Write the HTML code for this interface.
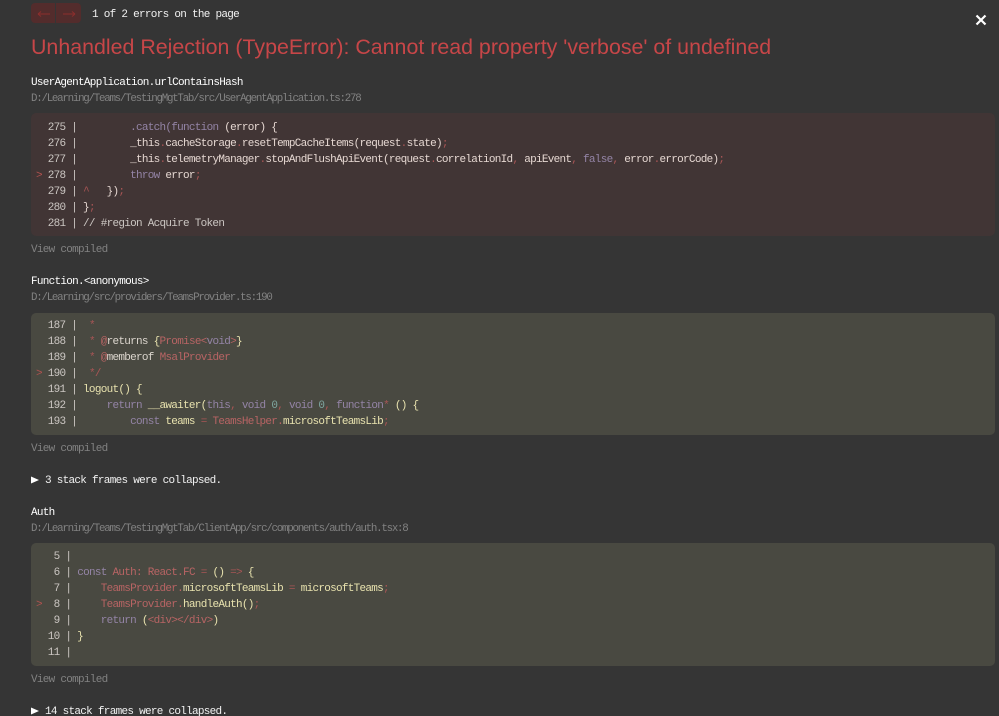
<!DOCTYPE html>
<html><head><meta charset="utf-8">
<style>
html,body{margin:0;padding:0;width:999px;height:716px;overflow:hidden;background:#353535}
#w{position:absolute;left:0;top:0;width:999px;height:716px;overflow:hidden;background:#353535;filter:blur(0.3px)}
.t{position:absolute;white-space:pre;font-family:"Liberation Mono",monospace;font-size:11px;letter-spacing:-0.72px;line-height:16px;height:16px;color:#eee}
.b{position:absolute;left:31px;width:964px;border-radius:5px}
.red{background:#413535}
.yel{background:#494941}
.g{color:#828282}
.f{font-size:10.8px;letter-spacing:-1.25px}
.n{color:#cbc6c2}
.c1{color:#e6d8d2}
.c2{color:#e8e2ae}
.k{color:#9484a6}
.p{color:#a85555}
.r{color:#b86464}
.o{color:#b4524f}
.m{color:#7fa6a0}
.lg{color:#dcd6ce}
</style></head><body><div id="w">

<div style="position:absolute;left:31px;top:3px;width:24px;height:20px;background:#532c2c;border-radius:4px 0 0 4px"></div>
<div style="position:absolute;left:56px;top:3px;width:25px;height:20px;background:#532c2c;border-radius:0 4px 4px 0"></div>
<svg style="position:absolute;left:31px;top:3px" width="50" height="20"><path d="M7 11H19M7 11l3-2.5M7 11l3 2.5M32 11H44M44 11l-3-2.5M44 11l-3 2.5" stroke="#8c2e2d" stroke-width="1" fill="none"/></svg>
<div class="t" style="left:92px;top:7px;color:#f2f2f2">1 of 2 errors on the page</div>
<svg style="position:absolute;left:975px;top:14px" width="12" height="12"><path d="M1.5 1.5L10.5 10.5M10.5 1.5L1.5 10.5" stroke="#fff" stroke-width="2.2" fill="none"/></svg>

<div style="position:absolute;left:31px;top:34px;white-space:pre;font-family:'Liberation Sans',sans-serif;font-size:21.38px;line-height:27px;color:#c74648">Unhandled Rejection (TypeError): Cannot read property 'verbose' of undefined</div>

<div class="t" style="left:31px;top:75px;color:#fff">UserAgentApplication.urlContainsHash</div>
<div class="t g f" style="left:31px;top:91px">D:/Learning/Teams/TestingMgtTab/src/UserAgentApplication.ts:278</div>
<div class="b red" style="top:113px;height:123px"></div>
<div class="t c1" style="left:36px;top:120px"><span class="n">  275 |</span>         <span class="k">.catch(function</span> (error) {</div>
<div class="t c1" style="left:36px;top:136px"><span class="n">  276 |</span>         _this<span class="p">.</span>cacheStorage<span class="p">.</span>resetTempCacheItems(request<span class="p">.</span>state)<span class="p">;</span></div>
<div class="t c1" style="left:36px;top:152px"><span class="n">  277 |</span>         _this<span class="p">.</span>telemetryManager<span class="p">.</span>stopAndFlushApiEvent(request<span class="p">.</span>correlationId<span class="p">,</span> apiEvent<span class="p">,</span> <span class="k">false</span><span class="p">,</span> error<span class="p">.</span>errorCode)<span class="p">;</span></div>
<div class="t c1" style="left:36px;top:168px"><span class="o">&gt;</span><span class="n"> 278 |</span>         <span class="k">throw</span> error<span class="p">;</span></div>
<div class="t c1" style="left:36px;top:184px"><span class="n">  279 |</span> <span class="p">^</span>   })<span class="p">;</span></div>
<div class="t c1" style="left:36px;top:200px"><span class="n">  280 |</span> }<span class="p">;</span></div>
<div class="t n" style="left:36px;top:216px">  281 | // #region Acquire Token</div>
<div class="t g" style="left:31px;top:242px">View compiled</div>

<div class="t" style="left:31px;top:274px;color:#fff">Function.&lt;anonymous&gt;</div>
<div class="t g f" style="left:31px;top:290px">D:/Learning/src/providers/TeamsProvider.ts:190</div>
<div class="b yel" style="top:313px;height:122px"></div>
<div class="t c2" style="left:36px;top:318px"><span class="n">  187 |</span>  <span class="p">*</span></div>
<div class="t c2" style="left:36px;top:334px"><span class="n">  188 |</span>  <span class="p">*</span> <span class="r">@</span><span class="lg">returns</span> {<span class="r">Promise&lt;</span><span class="k">void</span><span class="r">&gt;</span>}</div>
<div class="t c2" style="left:36px;top:350px"><span class="n">  189 |</span>  <span class="p">*</span> <span class="r">@</span><span class="lg">memberof</span> <span class="r">MsalProvider</span></div>
<div class="t c2" style="left:36px;top:366px"><span class="o">&gt;</span><span class="n"> 190 |</span>  <span class="p">*/</span></div>
<div class="t c2" style="left:36px;top:382px"><span class="n">  191 |</span> logout() {</div>
<div class="t c2" style="left:36px;top:398px"><span class="n">  192 |</span>     <span class="k">return</span> __awaiter(<span class="k">this</span><span class="p">,</span> <span class="k">void</span> <span class="m">0</span><span class="p">,</span> <span class="k">void</span> <span class="m">0</span><span class="p">,</span> <span class="k">function</span><span class="p">*</span> () {</div>
<div class="t c2" style="left:36px;top:414px"><span class="n">  193 |</span>         <span class="k">const</span> teams <span class="p">=</span> <span class="r">TeamsHelper.</span>microsoftTeamsLib<span class="p">;</span></div>
<div class="t g" style="left:31px;top:441px">View compiled</div>

<svg style="position:absolute;left:31px;top:476px" width="10" height="10"><path d="M0 0.5L8 4L0 7.5Z" fill="#fff"/></svg>
<div class="t" style="left:45px;top:473px;color:#f2f2f2">3 stack frames were collapsed.</div>

<div class="t" style="left:31px;top:505px;color:#fff">Auth</div>
<div class="t g f" style="left:31px;top:521px">D:/Learning/Teams/TestingMgtTab/ClientApp/src/components/auth/auth.tsx:8</div>
<div class="b yel" style="top:543px;height:123px"></div>
<div class="t c2" style="left:36px;top:549px"><span class="n">   5 |</span></div>
<div class="t c2" style="left:36px;top:565px"><span class="n">   6 |</span> <span class="k">const</span> <span class="r">Auth: React.FC</span> <span class="p">=</span> () <span class="p">=&gt;</span> {</div>
<div class="t c2" style="left:36px;top:581px"><span class="n">   7 |</span>     <span class="r">TeamsProvider.</span>microsoftTeamsLib <span class="p">=</span> microsoftTeams<span class="p">;</span></div>
<div class="t c2" style="left:36px;top:597px"><span class="o">&gt;</span><span class="n">  8 |</span>     <span class="r">TeamsProvider.</span>handleAuth()<span class="p">;</span></div>
<div class="t c2" style="left:36px;top:613px"><span class="n">   9 |</span>     <span class="k">return</span> (<span class="r">&lt;div&gt;&lt;/div&gt;</span>)</div>
<div class="t c2" style="left:36px;top:629px"><span class="n">  10 |</span> }</div>
<div class="t c2" style="left:36px;top:645px"><span class="n">  11 |</span></div>
<div class="t g" style="left:31px;top:672px">View compiled</div>

<svg style="position:absolute;left:31px;top:707px" width="10" height="10"><path d="M0 0.5L8 4L0 7.5Z" fill="#fff"/></svg>
<div class="t" style="left:45px;top:704px;color:#f2f2f2">14 stack frames were collapsed.</div>
</div></body></html>
